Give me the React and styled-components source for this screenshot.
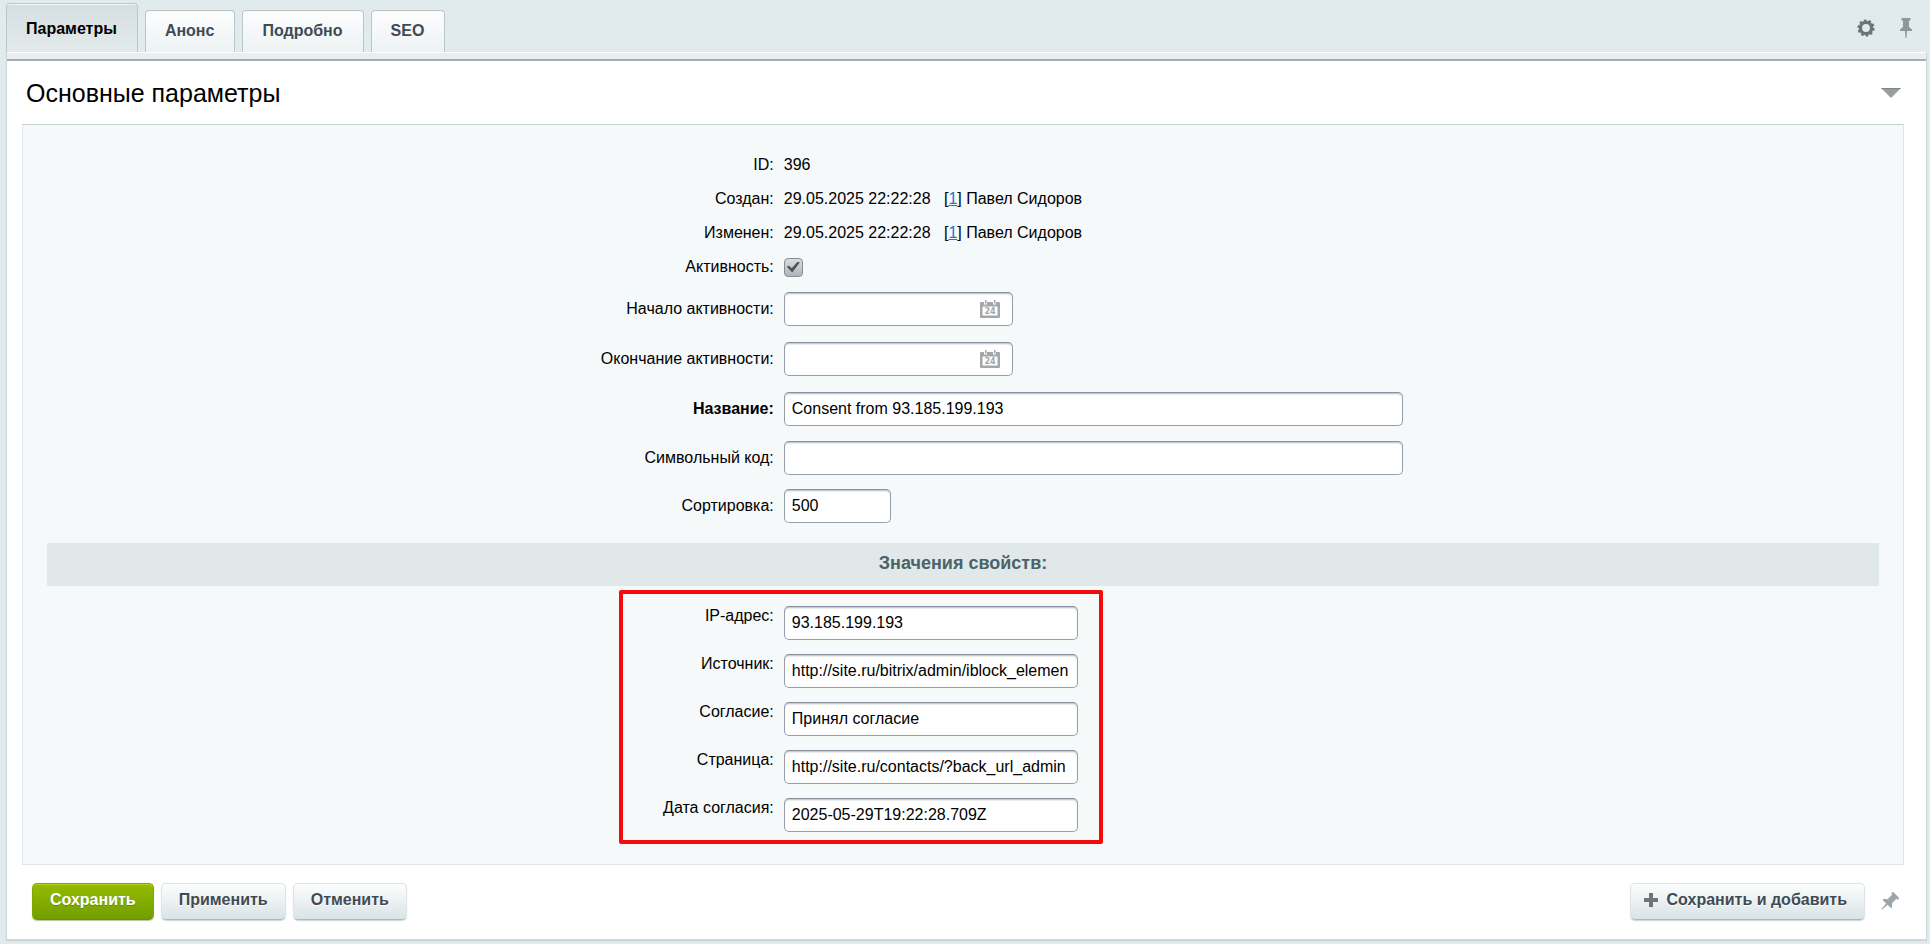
import { useState } from "react";
import styled, { createGlobalStyle } from "styled-components";

const GlobalStyle = createGlobalStyle`
  *, *::before {
    box-sizing: border-box;
  }
  body {
    margin: 0;
    background: #e1eaec;
    color: #000;
    font-family: "Liberation Sans", Arial, sans-serif;
    font-size: 16px;
    line-height: 20px;
  }
  input, button {
    font: inherit;
  }
`;

const tabs = ["Параметры", "Анонс", "Подробно", "SEO"];

const initialFields = {
  active: true,
  dateFrom: "",
  dateTo: "",
  name: "Consent from 93.185.199.193",
  code: "",
  sort: "500",
  ip: "93.185.199.193",
  source: "http://site.ru/bitrix/admin/iblock_elemen",
  consent: "Принял согласие",
  page: "http://site.ru/contacts/?back_url_admin",
  consentDate: "2025-05-29T19:22:28.709Z",
};

const properties = [
  { name: "ip", label: "IP-адрес:" },
  { name: "source", label: "Источник:" },
  { name: "consent", label: "Согласие:" },
  { name: "page", label: "Страница:" },
  { name: "consentDate", label: "Дата согласия:" },
];

const GearIcon = () => (
  <svg width="18" height="18" viewBox="0 0 18 18" aria-hidden="true">
    <circle cx="9" cy="9" r="5.6" fill="none" stroke="#6c7477" strokeWidth="3.4" />
    <circle
      cx="9"
      cy="9"
      r="7.6"
      fill="none"
      stroke="#6c7477"
      strokeWidth="2"
      strokeDasharray="2.6 2.175"
    />
  </svg>
);

const PinIcon = ({ color = "#8f9799", tilted }) => (
  <svg width="20" height="20" viewBox="0 0 20 20" aria-hidden="true">
    <path
      transform={tilted ? "rotate(45 10 10)" : undefined}
      fill={color}
      d="M5.5 0h9v2.5h-1.5v6.5l3 2.5v1.5h-5l-.5 7h-1l-.5-7h-5v-1.5l3-2.5v-6.5h-1.5z"
    />
  </svg>
);

const CalendarIcon = () => (
  <svg width="20" height="20" viewBox="0 0 20 20" aria-hidden="true">
    <path
      fill="#a3a7aa"
      fillRule="evenodd"
      d="M1 3h3v2.5h3v-2.5h6v2.5h3v-2.5h3q1 0 1 1v14q0 1-1 1h-18q-1 0-1-1v-14q0-1 1-1zM2.500 7.500v9h15v-9z"
    />
    <path fill="#a3a7aa" d="M5 1h1.500v3.500h-1.500zM14 1h1.500v3.500h-1.500z" />
    <text
      x="10"
      y="15"
      textAnchor="middle"
      fontSize="8"
      fontWeight="700"
      fontFamily="DejaVu Sans, sans-serif"
      fill="#a3a7aa"
    >
      24
    </text>
  </svg>
);

const PlusIcon = () => (
  <svg width="14" height="14" viewBox="0 0 14 14" aria-hidden="true">
    <path fill="#6d767a" d="M5 0h4v5h5v4h-5v5h-4v-5h-5v-4h5z" />
  </svg>
);

const ArrowIcon = () => (
  <svg width="20" height="10" viewBox="0 0 20 10" aria-hidden="true">
    <path fill="#999f9f" d="M0 0h20l-10 10z" />
    <path fill="#7e8585" d="M0 0h20l-1 1h-18z" />
  </svg>
);

const Author = ({ label }) => (
  <Row>
    <Label as="span">{label}</Label>
    <Value>
      29.05.2025 22:22:28 &nbsp; [<a href="#user">1</a>] Павел Сидоров
    </Value>
  </Row>
);

const App = () => {
  const [activeTab, setActiveTab] = useState(tabs[0]);
  const [fields, setFields] = useState(initialFields);

  const handleChange = (e) => {
    const { name, type, checked, value } = e.target;
    setFields({ ...fields, [name]: type === "checkbox" ? checked : value });
  };

  const bind = (name) => ({
    id: name,
    name,
    value: fields[name],
    onChange: handleChange,
  });

  return (
    <>
      <GlobalStyle />
      <Page>
        <TabBar>
          {tabs.map((tab) => (
            <Tab
              key={tab}
              type="button"
              $active={tab === activeTab}
              onClick={() => setActiveTab(tab)}
            >
              {tab}
            </Tab>
          ))}
          <Tools>
            <IconButton type="button" aria-label="Настроить">
              <GearIcon />
            </IconButton>
            <IconButton type="button" aria-label="Закрепить">
              <PinIcon />
            </IconButton>
          </Tools>
        </TabBar>
        <Panel onSubmit={(e) => e.preventDefault()}>
          <TitleRow>
            <Title>Основные параметры</Title>
            <IconButton type="button" aria-label="Свернуть">
              <ArrowIcon />
            </IconButton>
          </TitleRow>

          <Content>
            <Row>
              <Label as="span">ID:</Label>
              <Value>396</Value>
            </Row>
            <Author label="Создан:" />
            <Author label="Изменен:" />
            <Row>
              <Label htmlFor="active">Активность:</Label>
              <Value>
                <Checkbox
                  id="active"
                  name="active"
                  checked={fields.active}
                  onChange={handleChange}
                />
              </Value>
            </Row>
            <Row $height="50px">
              <Label htmlFor="dateFrom">Начало активности:</Label>
              <Value>
                <DateBox>
                  <DateInput {...bind("dateFrom")} />
                  <IconButton type="button" aria-label="Выбрать дату начала">
                    <CalendarIcon />
                  </IconButton>
                </DateBox>
              </Value>
            </Row>
            <Row $height="50px">
              <Label htmlFor="dateTo">Окончание активности:</Label>
              <Value>
                <DateBox>
                  <DateInput {...bind("dateTo")} />
                  <IconButton type="button" aria-label="Выбрать дату окончания">
                    <CalendarIcon />
                  </IconButton>
                </DateBox>
              </Value>
            </Row>
            <Row $height="49px">
              <Label htmlFor="name" $bold>
                Название:
              </Label>
              <Value>
                <Input {...bind("name")} $width="619px" />
              </Value>
            </Row>
            <Row $height="49px">
              <Label htmlFor="code">Символьный код:</Label>
              <Value>
                <Input {...bind("code")} $width="619px" />
              </Value>
            </Row>
            <Row $height="48px">
              <Label htmlFor="sort">Сортировка:</Label>
              <Value>
                <Input {...bind("sort")} $width="107px" />
              </Value>
            </Row>

            <Heading>Значения свойств:</Heading>

            <Properties>
              {properties.map(({ name, label }) => (
                <Row key={name} $height="48px">
                  <Label htmlFor={name} $top>
                    {label}
                  </Label>
                  <Value>
                    <Input {...bind(name)} $width="294px" />
                  </Value>
                </Row>
              ))}
              <Highlight />
            </Properties>
          </Content>

          <Footer>
            <Button type="submit" $primary>
              Сохранить
            </Button>
            <Button type="button">Применить</Button>
            <Button type="button">Отменить</Button>
            <FooterEnd>
              <Button type="button" $icon>
                <PlusIcon />
                Сохранить и добавить
              </Button>
              <IconButton type="button" aria-label="Открепить панель">
                <PinIcon color="#9ea5a8" tilted />
              </IconButton>
            </FooterEnd>
          </Footer>
        </Panel>
      </Page>
    </>
  );
};

export default App;

const Page = styled.main`
  padding: 3px 3px 5px 6px;
`;

const TabBar = styled.div`
  display: flex;
  align-items: flex-end;
  gap: 7px;
  padding-right: 11px;
`;

const Tab = styled.button`
  height: ${(props) => (props.$active ? "49px" : "42px")};
  padding: ${(props) => (props.$active ? "2px 20px 0 19px" : "0 20px 2px 19px")};
  border: 1px solid #bcc6c9;
  border-bottom: 0;
  border-radius: 4px 4px 0 0;
  background: ${(props) =>
    props.$active
      ? "linear-gradient(#d5dee1, #e3eaec)"
      : "linear-gradient(#fdfefe, #edf2f3)"};
  box-shadow: inset 0 1px #f5f8f8;
  color: ${(props) => (props.$active ? "#000" : "#3f4b54")};
  font-weight: 700;
  cursor: pointer;
`;

const Tools = styled.div`
  display: flex;
  align-items: center;
  align-self: center;
  gap: 21px;
  margin-left: auto;
`;

const IconButton = styled.button`
  display: flex;
  padding: 0;
  border: 0;
  background: none;
  cursor: pointer;
`;

const Panel = styled.form`
  padding: 0 22px 19px 15px;
  border: 1px solid #cdd7da;
  border-top: 0;
  background: #fff;
  box-shadow: 0 1px 1px #cdd7da;

  &::before {
    content: "";
    display: block;
    height: 9px;
    margin: 0 -22px 0 -15px;
    border-top: 1px solid #fff;
    border-bottom: 2px solid #a5afb1;
    background: #e9eff0;
  }
`;

const TitleRow = styled.div`
  display: flex;
  align-items: center;
  justify-content: space-between;
  height: 63px;
  padding: 0 3px 0 4px;
`;

const Title = styled.h1`
  margin: 0;
  font-size: 25px;
  font-weight: 400;
  line-height: 30px;
`;

const Content = styled.section`
  padding: 23px 24px 25px;
  border: 1px solid #dce5e8;
  border-top-color: #c4cdd0;
  background: #f5f9fa;
`;

const Row = styled.div`
  display: grid;
  grid-template-columns: 40% 60%;
  align-items: center;
  height: ${(props) => props.$height || "34px"};
`;

const Label = styled.label`
  align-self: ${(props) => (props.$top ? "start" : "center")};
  padding: ${(props) => (props.$top ? "7px 6px 0 0" : "0 6px 0 0")};
  font-weight: ${(props) => (props.$bold ? 700 : 400)};
  text-align: right;
`;

const Value = styled.div`
  padding-left: 4px;

  a {
    color: #2675d7;
  }
`;

const Input = styled.input.attrs({ type: "text" })`
  display: block;
  width: ${(props) => props.$width};
  max-width: 100%;
  height: 34px;
  padding: 0 5px 0 7px;
  border: 1px solid #959ea9;
  border-top-color: #87919c;
  border-radius: 5px;
  background: #fff;
  box-shadow: inset 0 2px 2px -1px #b4bbc1;
  color: #000;
`;

const DateBox = styled.div`
  display: flex;
  align-items: center;
  width: 229px;
  height: 34px;
  padding-right: 12px;
  border: 1px solid #959ea9;
  border-top-color: #87919c;
  border-radius: 5px;
  background: #fff;
  box-shadow: inset 0 2px 2px -1px #b4bbc1;
`;

const DateInput = styled.input.attrs({ type: "text" })`
  flex: 1;
  min-width: 0;
  padding: 0 7px;
  border: 0;
  background: none;
`;

const Checkbox = styled.input.attrs({ type: "checkbox" })`
  display: grid;
  place-items: center;
  appearance: none;
  width: 19px;
  height: 19px;
  margin: 0;
  border: 1px solid #868f94;
  border-radius: 4px;
  background: linear-gradient(#d9dddf, #aeb5b9);

  &:checked::before {
    content: "";
    width: 13px;
    height: 11px;
    background: #4d575d;
    clip-path: polygon(0 48%, 16% 38%, 38% 62%, 84% 0, 100% 10%, 42% 100%);
  }
`;

const Heading = styled.h2`
  margin: 13px 0 0;
  padding: 10px 0 13px;
  background: #e0e8ea;
  color: #4b6267;
  font-size: 18px;
  font-weight: 700;
  line-height: 20px;
  text-align: center;
`;

const Properties = styled.div`
  position: relative;
  padding-top: 13px;
`;

/* frame drawn over the property rows */
const Highlight = styled.div`
  position: absolute;
  top: 4px;
  bottom: -5px;
  left: calc(40% - 161px);
  width: 484px;
  border: 4px solid #f40b0b;
  border-radius: 2px;
  pointer-events: none;
`;

const Footer = styled.div`
  display: flex;
  align-items: center;
  gap: 7px;
  padding: 18px 0 0 10px;
`;

const FooterEnd = styled.div`
  display: flex;
  align-items: center;
  gap: 14px;
  margin-left: auto;
  padding-right: 5px;
`;

const Button = styled.button`
  display: flex;
  align-items: center;
  gap: 9px;
  height: 37px;
  padding: ${(props) => (props.$icon ? "0 17px 3px 13px" : "0 17px 3px")};
  border: 1px solid ${(props) => (props.$primary ? "#7fa800" : "#dde4e6")};
  border-bottom-color: ${(props) => (props.$primary ? "#6b9100" : "#aeb9bd")};
  border-radius: 5px;
  background: ${(props) =>
    props.$primary
      ? "linear-gradient(#95bb00, #729e00)"
      : "linear-gradient(#fdfefe, #d9e3e6)"};
  box-shadow: ${(props) =>
    props.$primary ? "inset 0 1px #b3d217, 0 1px 1px #b9c4a0" : "0 1px 1px #ccd5d8"};
  color: ${(props) => (props.$primary ? "#fff" : "#3f4b54")};
  font-weight: 700;
  text-shadow: ${(props) => (props.$primary ? "0 1px #6b8f00" : "0 1px #fff")};
  cursor: pointer;
`;
